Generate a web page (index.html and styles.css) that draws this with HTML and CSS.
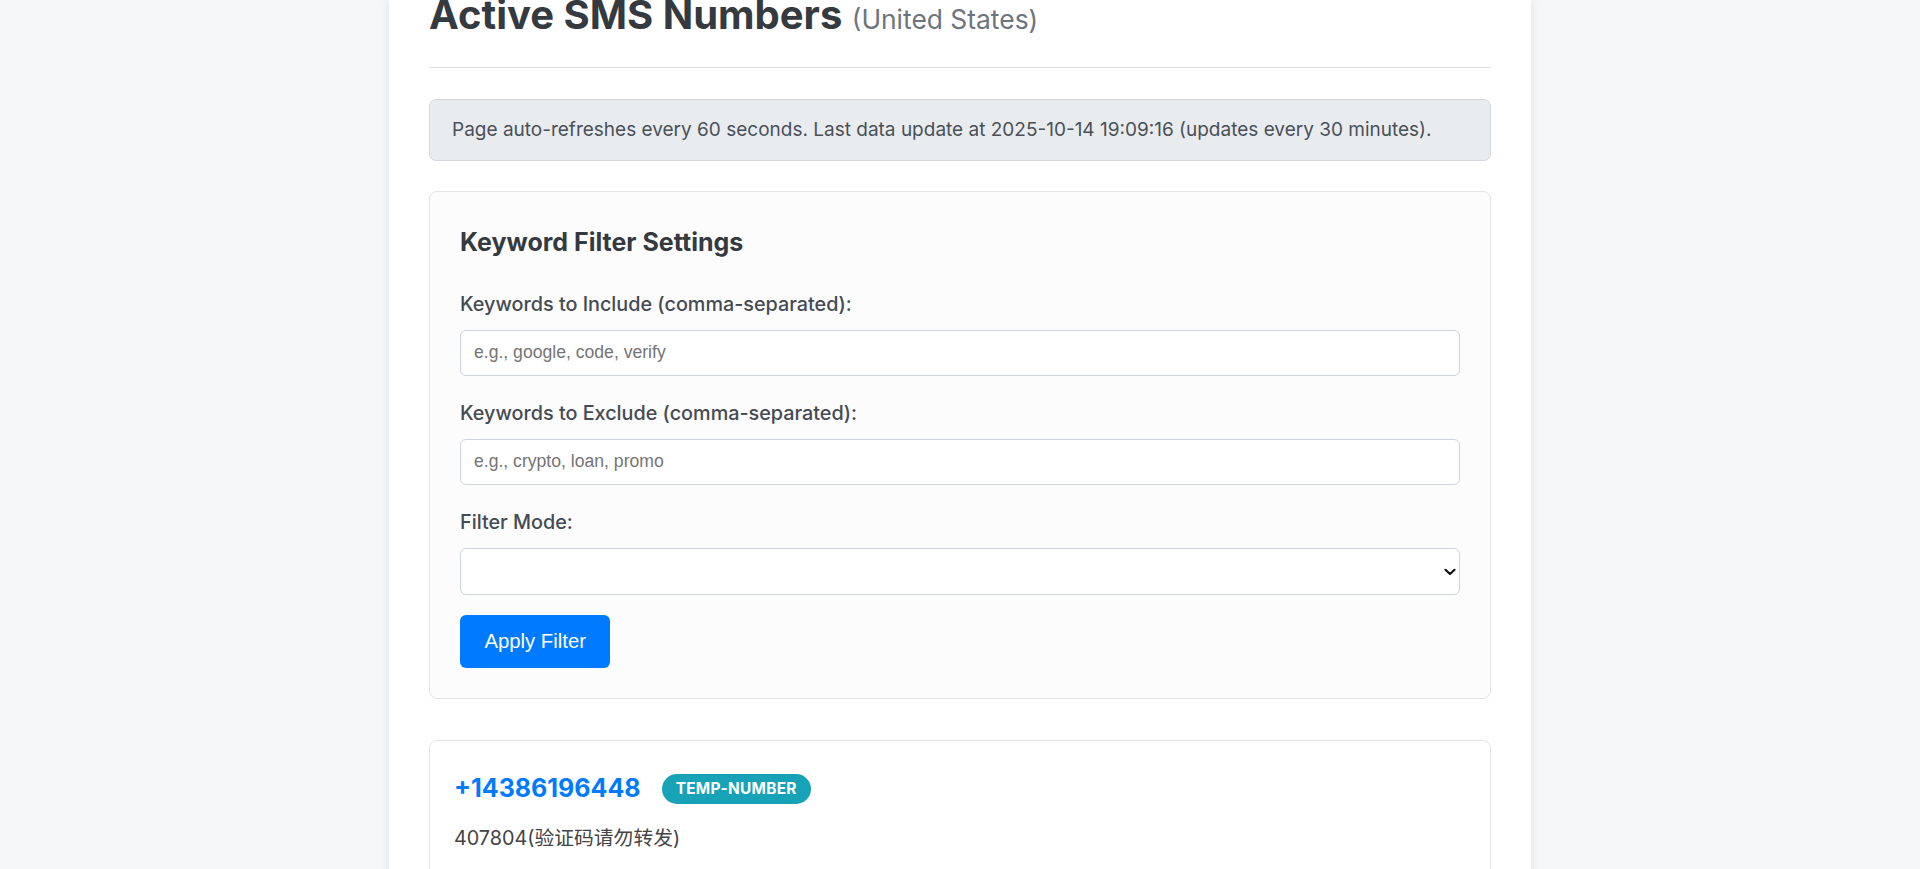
FILE: index.html
```html
<!DOCTYPE html>
<html lang="en">
<head>
<meta charset="utf-8">
<title>Active SMS Numbers</title>
<link rel="stylesheet" href="styles.css">
</head>
<body>
<main class="page">
  <h1 class="title">Active SMS Numbers <span class="country">(United States)</span></h1>

  <div class="info">Page auto-refreshes every 60 seconds. Last data update at 2025-10-14 19:09:16 (updates every 30 minutes).</div>

  <section class="filter-card">
    <h3 class="filter-title">Keyword Filter Settings</h3>
    <div class="field">
      <label class="field-label" for="include">Keywords to Include (comma-separated):</label>
      <input class="text-input" id="include" type="text" placeholder="e.g., google, code, verify">
    </div>
    <div class="field">
      <label class="field-label" for="exclude">Keywords to Exclude (comma-separated):</label>
      <input class="text-input" id="exclude" type="text" placeholder="e.g., crypto, loan, promo">
    </div>
    <div class="field field-last">
      <label class="field-label" for="mode">Filter Mode:</label>
      <div class="select-wrap">
        <select class="select-input" id="mode"></select>
        <svg class="select-arrow" width="12" height="8" viewBox="0 0 12 8" aria-hidden="true"><path d="M1.5 1.8 L6 6 L10.5 1.8" fill="none" stroke="#111" stroke-width="2.2" stroke-linecap="round" stroke-linejoin="round"/></svg>
      </div>
    </div>
    <button class="btn-apply" type="button">Apply Filter</button>
  </section>

  <section class="number-card">
    <div class="number-head">
      <a class="number-link" href="#">+14386196448</a>
      <span class="badge">TEMP-NUMBER</span>
    </div>
    <p class="message">407804(验证码请勿转发)</p>
    <p class="message-meta">&nbsp;</p>
  </section>
</main>
</body>
</html>
```

FILE: styles.css
```css
html, body {
  margin: 0;
  padding: 0;
}

body {
  background: #f6f7f9;
  font-family: "Inter", "Noto Sans", "Noto Sans CJK SC", sans-serif;
  color: #333;
  line-height: 1.5;
}

.page {
  box-sizing: border-box;
  width: 1142px;
  margin: 0 auto;
  padding: 0 40px 40px;
  min-height: 100vh;
  background: #fff;
  box-shadow: 0 0 10px rgba(0, 0, 0, 0.09);
  overflow: hidden;
}

.title {
  margin: -9.5px 0 31px;
  padding: 0 0 28.5px;
  border-bottom: 1px solid #dee2e6;
  font-size: 40px;
  line-height: 48px;
  font-weight: 700;
  color: #343a40;
}

.country {
  font-size: 26.4px;
  line-height: 1;
  font-weight: 400;
  color: #6c757d;
}

.info {
  padding: 17px 22px;
  background: #e9ecef;
  border: 1px solid #d3d7db;
  border-radius: 7px;
  font-size: 19px;
  line-height: 26px;
  color: #495057;
  margin-bottom: 30px;
}

.filter-card {
  padding: 29px 30px 30px;
  background: #fcfcfc;
  border: 1px solid #e2e4e7;
  border-radius: 8px;
}

.filter-title {
  margin: 3px 0 29.5px;
  font-size: 25px;
  line-height: 36px;
  font-weight: 700;
  color: #343a40;
}

.field {
  margin-bottom: 23px;
}

.field-last {
  margin-bottom: 20.5px;
}

.field-label {
  display: block;
  margin-bottom: 12px;
  font-size: 19.8px;
  line-height: 28px;
  font-weight: 500;
  color: #444b52;
}

.text-input {
  display: block;
  box-sizing: border-box;
  width: 100%;
  height: 46px;
  padding: 0 13px;
  border: 1px solid #ced4da;
  border-radius: 6px;
  background: #fff;
  font-family: "Liberation Sans", Arial, sans-serif;
  font-size: 17.6px;
  color: #333;
  outline: none;
}

.text-input::placeholder {
  color: #757575;
}

.select-wrap {
  position: relative;
}

.select-input {
  display: block;
  box-sizing: border-box;
  width: 100%;
  height: 47px;
  padding: 0 13px;
  border: 1px solid #ced4da;
  border-radius: 6px;
  background: #fff;
  font-family: "Liberation Sans", Arial, sans-serif;
  font-size: 17.6px;
  -webkit-appearance: none;
  appearance: none;
  outline: none;
}

.select-arrow {
  position: absolute;
  right: 4px;
  top: 20px;
}

.btn-apply {
  display: block;
  height: 53px;
  padding: 0 24.5px;
  border: 0;
  border-radius: 6px;
  background: #007bff;
  color: #fff;
  font-family: "Liberation Sans", Arial, sans-serif;
  font-size: 20.3px;
}

.number-card {
  margin-top: 41px;
  padding: 29px 24px 24px;
  background: #fff;
  border: 1px solid #e2e4e7;
  border-radius: 8px;
}

.number-head {
  display: flex;
  align-items: center;
  gap: 21px;
}

.number-link {
  font-size: 25px;
  line-height: 37.5px;
  font-weight: 700;
  color: #007bff;
  text-decoration: none;
}

.badge {
  height: 30px;
  padding: 0 14px;
  border-radius: 15px;
  background: #17a2b8;
  color: #fff;
  font-size: 15.4px;
  line-height: 30px;
  font-weight: 700;
  letter-spacing: 0.3px;
}

.message {
  margin: 16px 0 0;
  font-size: 19.8px;
  line-height: 29.7px;
  color: #444;
}

.message-meta {
  margin: 10px 0 0;
  font-size: 14px;
  color: #888;
}
```
